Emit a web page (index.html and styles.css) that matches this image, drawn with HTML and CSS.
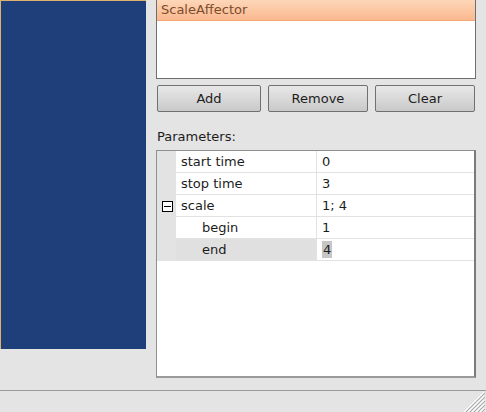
FILE: index.html
```html
<!DOCTYPE html>
<html>
<head>
<meta charset="utf-8">
<link rel="stylesheet" href="styles.css">
</head>
<body>
<div class="window">
  <div class="main">
    <div class="canvas"></div>
    <div class="side">
      <div class="list">
        <div class="item selected">ScaleAffector</div>
      </div>
      <div class="buttons">
        <button class="btn btn-add">Add</button>
        <button class="btn">Remove</button>
        <button class="btn">Clear</button>
      </div>
      <div class="label">Parameters:</div>
      <div class="props">
        <div class="row">
          <div class="gutter"></div>
          <div class="name">start time</div>
          <div class="value">0</div>
        </div>
        <div class="row">
          <div class="gutter"></div>
          <div class="name">stop time</div>
          <div class="value">3</div>
        </div>
        <div class="row">
          <div class="gutter">
            <svg class="expander" width="11" height="11" viewBox="0 0 11 11"><rect x="0.5" y="0.5" width="10" height="10" fill="#fff" stroke="#000"/><line x1="2" y1="5.5" x2="9" y2="5.5" stroke="#000"/></svg>
          </div>
          <div class="name">scale</div>
          <div class="value">1; 4</div>
        </div>
        <div class="row">
          <div class="gutter"></div>
          <div class="name child">begin</div>
          <div class="value">1</div>
        </div>
        <div class="row current">
          <div class="gutter"></div>
          <div class="name child">end</div>
          <div class="value"><span class="sel-text">4</span></div>
        </div>
      </div>
    </div>
  </div>
  <div class="status">
    <svg class="grip" width="24" height="21" viewBox="0 0 24 21">
      <g stroke="#ffffff" stroke-width="1">
        <line x1="23" y1="1" x2="3" y2="21"/>
        <line x1="23" y1="5" x2="7" y2="21"/>
        <line x1="23" y1="9" x2="11" y2="21"/>
        <line x1="23" y1="13" x2="15" y2="21"/>
        <line x1="23" y1="17" x2="19" y2="21"/>
      </g>
      <g stroke="#a8a8a8" stroke-width="1">
        <line x1="24" y1="2" x2="5" y2="21"/>
        <line x1="24" y1="6" x2="9" y2="21"/>
        <line x1="24" y1="10" x2="13" y2="21"/>
        <line x1="24" y1="14" x2="17" y2="21"/>
        <line x1="24" y1="18" x2="21" y2="21"/>
      </g>
    </svg>
  </div>
</div>
</body>
</html>
```
FILE: styles.css
```css
html, body {
  margin: 0;
  padding: 0;
}
body {
  background: #e4e4e4;
  font-family: "DejaVu Sans", Verdana, sans-serif;
  font-size: 13px;
  color: #1c1c1c;
  width: 486px;
  height: 412px;
  overflow: hidden;
}
.window {
  display: flex;
  flex-direction: column;
  height: 412px;
}
.main {
  display: flex;
  height: 390px;
  gap: 10px;
}
.canvas {
  width: 145px;
  height: 348px;
  background: #1f3f7b;
  border-top: 1px solid #e0b070;
  border-left: 1px solid #e0b070;
}
.side {
  width: 320px;
  display: flex;
  flex-direction: column;
}
.list {
  height: 78px;
  background: #fff;
  border: 1px solid #6e6e6e;
  border-top: none;
}
.item {
  height: 21px;
  line-height: 20px;
  padding-left: 4px;
  box-sizing: border-box;
}
.item.selected {
  background: linear-gradient(#fdd6b8, #fbb88f);
  color: #7b4c2c;
  border-bottom: 1px solid #f5a878;
}
.buttons {
  display: flex;
  gap: 7px;
  margin-top: 6px;
  padding-left: 1px;
}
.btn {
  width: 100px;
  height: 27px;
  border: 1px solid #707070;
  border-radius: 2px;
  background: linear-gradient(#e8e8e8, #c9c9c9);
  font-family: "DejaVu Sans", Verdana, sans-serif;
  font-size: 13px;
  color: #1c1c1c;
  padding: 0;
}
.btn-add {
  width: 104px;
}
.label {
  margin-top: 17px;
  height: 21px;
  padding-left: 1px;
  line-height: 16px;
}
.props {
  height: 225px;
  background: #fff;
  border: 1px solid #8f8f8f;
  border-right: 2px solid #7a7a7a;
  border-bottom: 2px solid #9a9a9a;
  display: flex;
  flex-direction: column;
}
.row {
  display: flex;
  height: 22px;
}
.gutter {
  width: 19px;
  background: #e3e3e3;
  display: flex;
  align-items: center;
  justify-content: center;
}
.expander {
  display: block;
  margin-left: 1px;
}
.name {
  width: 141px;
  padding-left: 5px;
  box-sizing: border-box;
  border-right: 1px solid #e2e2e2;
  border-bottom: 1px solid #e2e2e2;
  line-height: 21px;
}
.name.child {
  padding-left: 26px;
}
.value {
  flex: 1;
  padding-left: 5px;
  border-bottom: 1px solid #e2e2e2;
  line-height: 21px;
}
.row.current .name {
  background: #e0e0e0;
}
.sel-text {
  background: #c6c6c6;
  display: inline-block;
  padding: 0 1px;
  line-height: 17px;
}
.status {
  height: 21px;
  border-top: 1px solid #9a9a9a;
  display: flex;
  justify-content: flex-end;
  align-items: flex-end;
}
.grip {
  display: block;
  margin-right: 1px;
}
```
